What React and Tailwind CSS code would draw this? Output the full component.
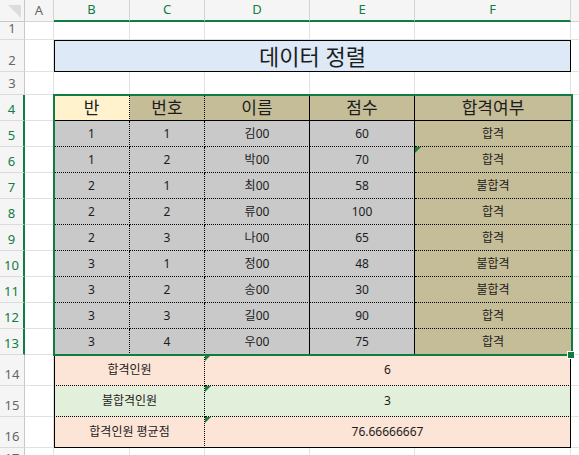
import React from "react";

const font = { fontFamily: '"Noto Sans", "Noto Sans CJK KR", sans-serif' };

const rows = [
  ["1", "1", "김00", "60", "합격"],
  ["1", "2", "박00", "70", "합격"],
  ["2", "1", "최00", "58", "불합격"],
  ["2", "2", "류00", "100", "합격"],
  ["2", "3", "나00", "65", "합격"],
  ["3", "1", "정00", "48", "불합격"],
  ["3", "2", "송00", "30", "불합격"],
  ["3", "3", "길00", "90", "합격"],
  ["3", "4", "우00", "75", "합격"],
];

const summary = [
  { label: "합격인원", value: "6", bg: "bg-[#fce4d6]" },
  { label: "불합격인원", value: "3", bg: "bg-[#e2efda]" },
  { label: "합격인원 평균점", value: "76.66666667", bg: "bg-[#fce4d6]" },
];

function Flag() {
  return (
    <span className="absolute left-0 top-0 w-0 h-0 border-t-[6px] border-r-[6px] border-t-[#1a7f37] border-r-transparent" />
  );
}

function RowHead({ n, active }) {
  return (
    <div
      className={
        "w-[25px] shrink-0 flex items-end justify-center pb-[1px] bg-[#f5f5f5] text-[13px] border-b border-[#dadada] " +
        (active
          ? "text-[#107c41] border-r-2 border-r-[#107c41]"
          : "text-[#666] border-r border-r-[#c8c8c8]")
      }
    >
      {n}
    </div>
  );
}

function Blank({ w }) {
  return <div className={w + " shrink-0 border-r border-b border-[#e1e1e1]"} />;
}

export default function App() {
  return (
    <div className="relative w-[579px] h-[455px] overflow-hidden bg-white text-[#1c1c1c]" style={font}>
      {/* column headers */}
      <div className="flex h-[22px] bg-[#f5f5f5] text-[13px]">
        <div className="w-[25px] shrink-0 relative border-r border-b border-[#c8c8c8]">
          <span className="absolute right-[3px] bottom-[3px] w-0 h-0 border-l-[13px] border-t-[13px] border-l-transparent border-t-[#dcdcdc]" />
        </div>
        <div className="w-[29px] shrink-0 flex items-center justify-center text-[#666] border-r border-b border-[#d4d4d4]">A</div>
        {[
          ["B", "w-[76px]"],
          ["C", "w-[75px]"],
          ["D", "w-[105px]"],
          ["E", "w-[105px]"],
          ["F", "w-[156px]"],
        ].map(([c, w]) => (
          <div
            key={c}
            className={w + " shrink-0 flex items-center justify-center text-[#107c41] border-r border-r-[#d4d4d4] border-b-2 border-b-[#107c41]"}
          >
            {c}
          </div>
        ))}
        <div className="flex-1 border-b border-[#d4d4d4]" />
      </div>

      {/* row 1 */}
      <div className="flex h-[18px]">
        <RowHead n="1" />
        <Blank w="w-[29px]" />
        <Blank w="w-[76px]" />
        <Blank w="w-[75px]" />
        <Blank w="w-[105px]" />
        <Blank w="w-[105px]" />
        <Blank w="w-[156px]" />
        <div className="flex-1 border-b border-[#e1e1e1]" />
      </div>

      {/* row 2 title */}
      <div className="flex h-[32px]">
        <RowHead n="2" />
        <Blank w="w-[29px]" />
        <div className="w-[517px] shrink-0 flex items-center justify-center bg-[#dde9f6] border border-black text-[22px] leading-none">
          데이터 정렬
        </div>
        <div className="flex-1 border-b border-[#e1e1e1]" />
      </div>

      {/* row 3 */}
      <div className="flex h-[23px]">
        <RowHead n="3" />
        <Blank w="w-[29px]" />
        <Blank w="w-[76px]" />
        <Blank w="w-[75px]" />
        <Blank w="w-[105px]" />
        <Blank w="w-[105px]" />
        <Blank w="w-[156px]" />
        <div className="flex-1 border-b border-[#e1e1e1]" />
      </div>

      {/* row 4 header */}
      <div className="flex h-[26px] text-[17px]">
        <RowHead n="4" active />
        <Blank w="w-[29px]" />
        <div className="w-[76px] shrink-0 flex items-center justify-center bg-[#fff2cc] border-b border-b-black border-r border-r-black [border-right-style:dotted]">반</div>
        <div className="w-[75px] shrink-0 flex items-center justify-center bg-[#c4bd97] border-b border-b-black border-r border-r-black [border-right-style:dotted]">번호</div>
        <div className="w-[105px] shrink-0 flex items-center justify-center bg-[#c4bd97] border-b border-r border-black">이름</div>
        <div className="w-[105px] shrink-0 flex items-center justify-center bg-[#c4bd97] border-b border-r border-black">점수</div>
        <div className="w-[156px] shrink-0 flex items-center justify-center bg-[#c4bd97] border-b border-black">합격여부</div>
        <div className="flex-1 border-b border-[#e1e1e1]" />
      </div>

      {/* data rows */}
      {rows.map((r, i) => (
        <div key={i} className="flex h-[26px] text-[12px]">
          <RowHead n={String(i + 5)} active />
          <Blank w="w-[29px]" />
          <div className="w-[76px] shrink-0 flex items-center justify-center bg-[#c9c9c9] border-b border-r border-black border-dotted">{r[0]}</div>
          <div className="w-[75px] shrink-0 flex items-center justify-center bg-[#c9c9c9] border-b border-r border-black border-dotted">{r[1]}</div>
          <div className="w-[105px] shrink-0 flex items-center justify-center bg-[#c9c9c9] border-b border-r border-black [border-bottom-style:dotted]">{r[2]}</div>
          <div className="w-[105px] shrink-0 flex items-center justify-center bg-[#c9c9c9] border-b border-r border-black [border-bottom-style:dotted]">{r[3]}</div>
          <div className="relative w-[156px] shrink-0 flex items-center justify-center bg-[#c4bd97] border-b border-black border-dotted">
            {i === 1 && <Flag />}
            {r[4]}
          </div>
          <div className="flex-1 border-b border-[#e1e1e1]" />
        </div>
      ))}

      {/* summary rows */}
      {summary.map((s, i) => (
        <div key={i} className="flex h-[31px] text-[12px]">
          <RowHead n={String(i + 14)} />
          <Blank w="w-[29px]" />
          <div
            className={
              s.bg +
              " w-[151px] shrink-0 flex items-center justify-center border-l border-l-black border-r border-r-black [border-right-style:dotted] border-b border-b-black " +
              (i === 2 ? "" : "[border-bottom-style:dotted]")
            }
          >
            {s.label}
          </div>
          <div
            className={
              s.bg +
              " relative w-[366px] shrink-0 flex items-center justify-center border-r border-r-black border-b border-b-black " +
              (i === 2 ? "" : "[border-bottom-style:dotted]")
            }
          >
            <Flag />
            {s.value}
          </div>
          <div className="flex-1 border-b border-[#e1e1e1]" />
        </div>
      ))}

      {/* row 17 */}
      <div className="flex h-[22px]">
        <RowHead n="17" />
        <Blank w="w-[29px]" />
        <Blank w="w-[76px]" />
        <Blank w="w-[75px]" />
        <Blank w="w-[105px]" />
        <Blank w="w-[105px]" />
        <Blank w="w-[156px]" />
        <div className="flex-1 border-b border-[#e1e1e1]" />
      </div>

      {/* selection */}
      <div className="absolute left-[53px] top-[94px] w-[520px] h-[262px] border-2 border-[#107c41] pointer-events-none" />
      <div className="absolute left-[567px] top-[351px] w-[8px] h-[8px] bg-[#107c41] border border-white" />
    </div>
  );
}
